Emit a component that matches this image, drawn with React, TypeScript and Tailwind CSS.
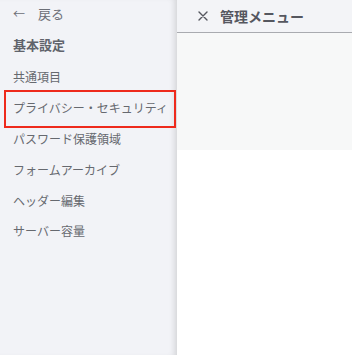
const items = ["共通項目", "プライバシー・セキュリティ", "パスワード保護領域", "フォームアーカイブ", "ヘッダー編集", "サーバー容量"];

export default function App() {
  return (
    <div
      className="flex h-[355px] w-[352px] overflow-hidden bg-white"
      style={{ fontFamily: '"Noto Sans CJK JP", "Noto Sans", sans-serif' }}
    >
      <aside className="relative z-10 flex w-[177px] shrink-0 flex-col bg-[#f2f3f7] shadow-[inset_-6px_0_6px_-4px_rgba(0,0,0,0.14)]">
        <div className="flex h-[28px] items-center pl-[13px] text-[13px] text-[#6b6e76]">
          <span className="w-[25px] text-[12px]">←</span>
          <span>戻る</span>
        </div>
        <div className="flex h-[34px] items-center pl-[13px] text-[13px] font-bold text-[#60636b]">基本設定</div>
        <ul className="flex flex-col">
          {items.map((label, i) => (
            <li
              key={label}
              className="relative flex h-[30.8px] items-center whitespace-nowrap pl-[13px] text-[12px] text-[#66696f]"
            >
              {label}
              {i === 1 && (
                <span className="pointer-events-none absolute left-[4px] right-[1px] top-[-3px] bottom-[-4px] border-2 border-[#ee2a1c]" />
              )}
            </li>
          ))}
        </ul>
      </aside>
      <main className="flex flex-1 flex-col">
        <header className="flex h-[33px] items-center border-b border-[#a9abb0] bg-[#f3f4f7] pl-[21px] text-[#55575f]">
          <svg width="10" height="10" viewBox="0 0 10 10" className="mr-[12px]">
            <path d="M1 1L9 9M9 1L1 9" stroke="#55575f" strokeWidth="1.4" strokeLinecap="round" />
          </svg>
          <span className="text-[14px] font-bold">管理メニュー</span>
        </header>
        <div className="h-[117px] bg-[#f7f8f8]" />
        <div className="flex-1 bg-white" />
      </main>
    </div>
  );
}
